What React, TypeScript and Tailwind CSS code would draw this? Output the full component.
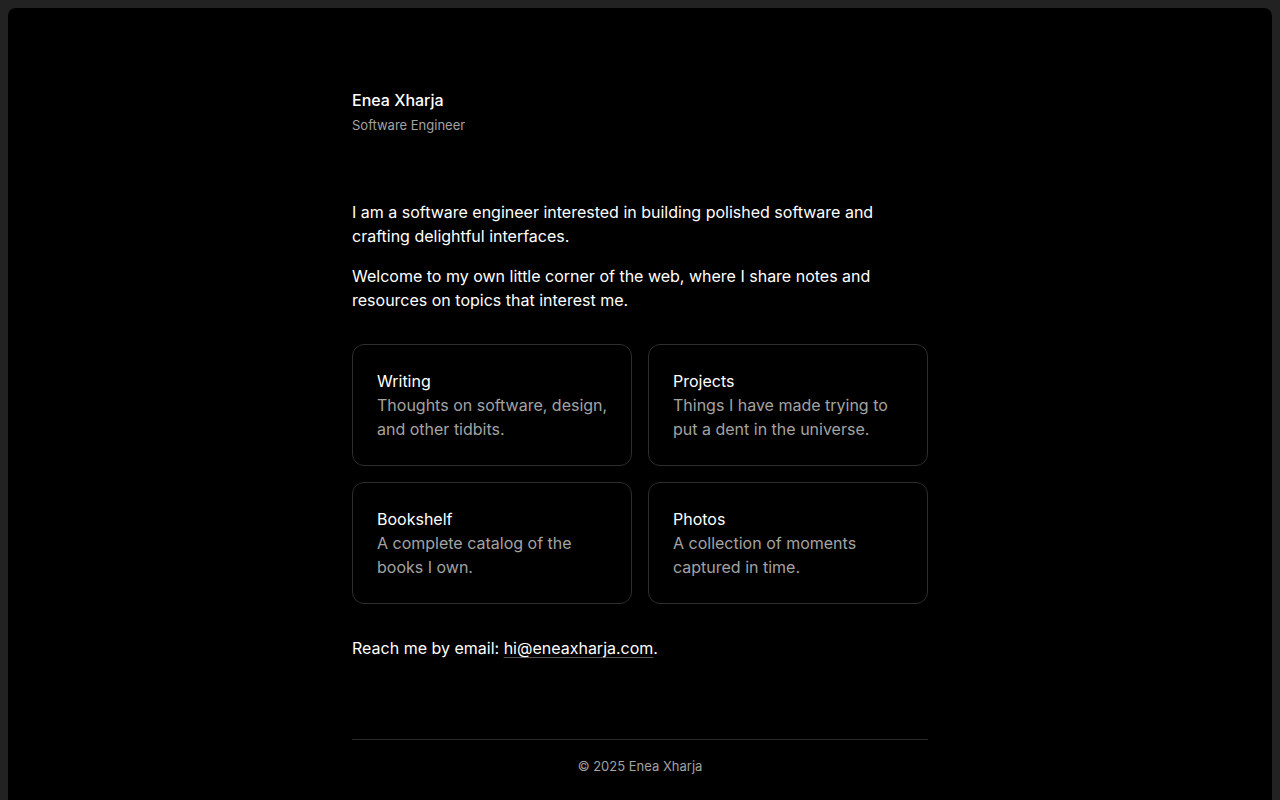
import React from "react";

const cards = [
  { title: "Writing", desc: "Thoughts on software, design, and other tidbits." },
  { title: "Projects", desc: "Things I have made trying to put a dent in the universe." },
  { title: "Bookshelf", desc: "A complete catalog of the books I own." },
  { title: "Photos", desc: "A collection of moments captured in time." },
];

export default function App() {
  return (
    <div
      className="min-h-screen bg-[#222222] px-2 pt-2 text-white"
      style={{ fontFamily: "Inter, 'Noto Sans', sans-serif" }}
    >
      <div className="min-h-[800px] rounded-t-lg bg-black">
        <div className="mx-auto w-[576px] pt-20">
          <header>
            <div className="text-base leading-6 font-medium text-white">Enea Xharja</div>
            <div className="text-[13px] leading-5 text-[#a3a3a3] mt-[3px]">Software Engineer</div>
          </header>
          <main className="mt-[65px]">
            <p className="text-base leading-6 text-white">
              I am a software engineer interested in building polished software and crafting delightful interfaces.
            </p>
            <p className="mt-4 text-base leading-6 text-white">
              Welcome to my own little corner of the web, where I share notes and resources on topics that interest me.
            </p>
            <div className="mt-8 grid grid-cols-2 gap-4">
              {cards.map((c) => (
                <div key={c.title} className="rounded-xl border border-[#2e2e2e] py-6 pl-6 pr-4">
                  <div className="text-base leading-6 text-white">{c.title}</div>
                  <div className="text-base leading-6 text-[#a3a3a3]">{c.desc}</div>
                </div>
              ))}
            </div>
            <p className="mt-8 text-base leading-6 text-white">
              Reach me by email:{" "}
              <a className="underline decoration-[#555] underline-offset-[3px]" href="#">
                hi@eneaxharja.com
              </a>
              .
            </p>
          </main>
          <footer className="mt-[79px] border-t border-[#2a2a2a] pt-4 text-center text-[13px] leading-5 text-[#a3a3a3]">
            © 2025 Enea Xharja
          </footer>
        </div>
      </div>
    </div>
  );
}
